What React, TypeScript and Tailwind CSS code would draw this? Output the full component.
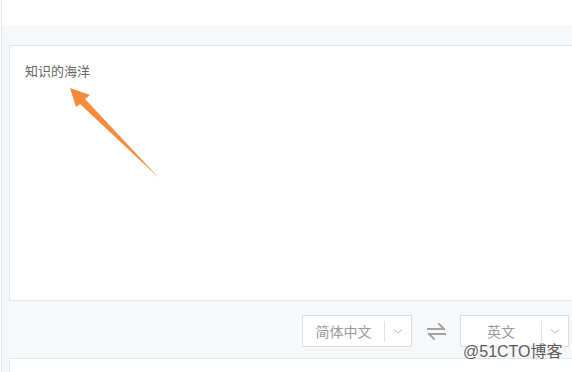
import React from 'react';

const cjk = { fontFamily: '"Noto Sans CJK SC", "Noto Sans", sans-serif' };

const Chevron = () => (
  <svg className="h-3 w-3 text-[#b5b5b5]" fill="none" viewBox="0 0 12 12" stroke="currentColor">
    <path strokeWidth={1} d="M2 4.5l4 3.5 4-3.5" />
  </svg>
);

interface LangSelectProps {
  label: string;
  width: string;
}

const LangSelect: React.FC<LangSelectProps> = ({ label, width }) => (
  <div className={`flex h-[32px] items-center border border-[#dcdcdc] bg-white ${width}`}>
    <span className="flex-1 text-center text-[14px] text-[#9a9a9a]" style={cjk}>
      {label}
    </span>
    <div className="h-[21px] w-px bg-[#e2e2e2]" />
    <div className="flex w-[26px] items-center justify-center">
      <Chevron />
    </div>
  </div>
);

const SwapIcon = () => (
  <svg className="mx-[15px] mr-[14px] h-[17px] w-[19px] text-[#a3a3a3]" fill="none" viewBox="0 0 19 17" stroke="currentColor">
    <path strokeWidth={2} strokeLinecap="square" d="M1 6h16M17 6l-5-5" />
    <path strokeWidth={2} strokeLinecap="square" d="M18 11H2M2 11l5 5" />
  </svg>
);

export default function App() {
  return (
    <div className="relative h-[372px] w-full overflow-hidden bg-white">
      <div className="ml-px flex h-full flex-col border-l border-[#dbe6f6]">
        <div className="h-[25px] shrink-0 bg-white" />
        <div className="flex flex-1 shrink-0 flex-col bg-[#f7f8fa] pl-[7px]">
          <div className="mt-[20px] -mr-4 h-[256px] shrink-0 border border-[#dbe6f6] bg-white px-[15px] pt-[15px]">
            <p className="text-[13px] leading-[20px] text-[#666666]" style={cjk}>
              知识的海洋
            </p>
          </div>
          <div className="mt-[14px] flex shrink-0 items-center justify-end pr-[3px]">
            <LangSelect label="简体中文" width="w-[110px]" />
            <SwapIcon />
            <LangSelect label="英文" width="w-[109px]" />
          </div>
          <div className="mt-[11px] -mr-4 h-[40px] shrink-0 border border-[#dbe6f6] bg-white" />
        </div>
      </div>

      <svg className="pointer-events-none absolute left-0 top-0 h-[372px] w-[572px]" viewBox="0 0 572 372">
        <polygon points="70,88 90,95 85,99 159,178 80,104 76,107" fill="#f68b3b" />
      </svg>

      <span
        className="pointer-events-none absolute left-[463px] top-[342px] text-[16px] leading-[20px] text-[#5a5a5a]"
        style={{
          fontFamily: '"Liberation Sans", "Noto Sans CJK SC", sans-serif',
          textShadow: '0 0 2px #fff, 0 0 2px #fff',
        }}
      >
        @51CTO博客
      </span>
    </div>
  );
}
